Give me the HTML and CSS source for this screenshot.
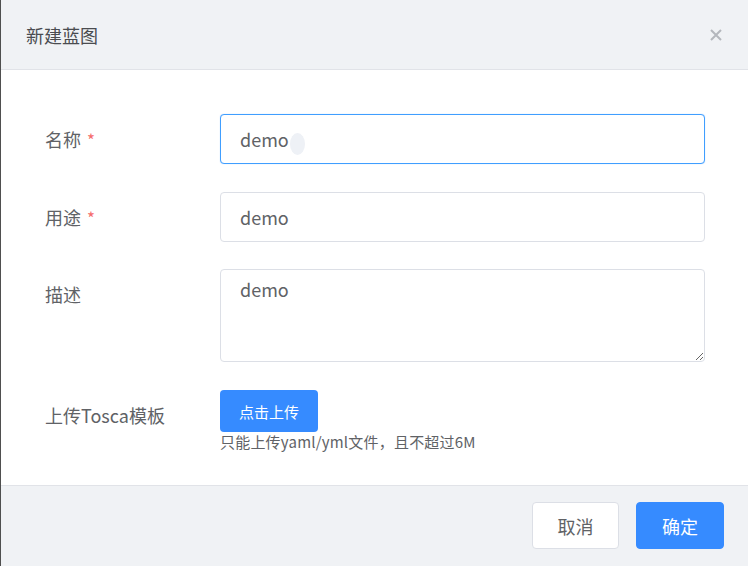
FILE: index.html
```html
<!DOCTYPE html>
<html lang="zh-CN">
<head>
<meta charset="utf-8">
<title>新建蓝图</title>
<link rel="stylesheet" href="styles.css">
</head>
<body>
<div class="dialog">
  <div class="dialog-header">
    <span class="dialog-title">新建蓝图</span>
    <button class="dialog-close" aria-label="关闭">
      <svg width="12" height="12" viewBox="0 0 12 12"><path d="M1 1L11 11M11 1L1 11" stroke="#b4b7bd" stroke-width="2" fill="none"/></svg>
    </button>
  </div>
  <div class="dialog-body">
    <div class="form-item">
      <label class="form-label">名称<span class="req">*</span></label>
      <div class="form-content">
        <div class="input-wrap">
          <input class="input is-focus" type="text" value="demo">
          <span class="blob"></span>
        </div>
      </div>
    </div>
    <div class="form-item">
      <label class="form-label">用途<span class="req">*</span></label>
      <div class="form-content">
        <input class="input" type="text" value="demo">
      </div>
    </div>
    <div class="form-item desc-item">
      <label class="form-label">描述</label>
      <div class="form-content">
        <textarea class="textarea">demo</textarea>
      </div>
    </div>
    <div class="form-item upload-item">
      <label class="form-label">上传Tosca模板</label>
      <div class="form-content">
        <button class="btn-upload">点击上传</button>
        <div class="tip">只能上传yaml/yml文件，且不超过6M</div>
      </div>
    </div>
  </div>
  <div class="dialog-footer">
    <button class="btn btn-default">取消</button>
    <button class="btn btn-primary">确定</button>
  </div>
</div>
</body>
</html>
```
FILE: styles.css
```css
* { box-sizing: border-box; }
html, body { margin: 0; padding: 0; }
body {
  font-family: "Noto Sans CJK SC", "Noto Sans", sans-serif;
  background: #ffffff;
  width: 748px;
  height: 566px;
  overflow: hidden;
}
.dialog {
  width: 748px;
  height: 566px;
  display: flex;
  flex-direction: column;
  border-left: 1px solid #4f4f4f;
  background: #fff;
}
.dialog-header {
  height: 70px;
  flex: none;
  background: #f0f2f5;
  border-bottom: 1px solid #e1e3e8;
  display: flex;
  align-items: center;
  justify-content: space-between;
  padding: 0 26px 0 25px;
}
.dialog-title {
  font-size: 18px;
  color: #4a4c50;
  line-height: 24px;
}
.dialog-close {
  border: 0;
  background: transparent;
  padding: 0;
  width: 12px;
  height: 12px;
  display: flex;
  cursor: pointer;
}
.dialog-body {
  flex: 1;
  padding: 44px 0 0 44px;
  display: flex;
  flex-direction: column;
  gap: 28px;
}
.form-item {
  display: flex;
  align-items: flex-start;
}
.desc-item { margin-top: -1px; }
.form-label {
  width: 175px;
  height: 50px;
  flex: none;
  font-size: 18px;
  line-height: 50px;
  color: #606266;
}
.req {
  color: #f56c6c;
  margin-left: 6px;
  font-size: 17px;
  line-height: 1;
}
.form-content {
  width: 485px;
  display: flex;
  flex-direction: column;
}
.input-wrap { position: relative; }
.input {
  width: 485px;
  height: 50px;
  border: 1px solid #dcdfe6;
  border-radius: 4px;
  padding: 0 19px;
  font-family: inherit;
  font-size: 18px;
  color: #606266;
  background: #fff;
  outline: none;
  display: block;
}
.input.is-focus {
  border-color: #409eff;
  box-shadow: 0 0 1px 0 rgba(64, 158, 255, 0.5);
}
.blob {
  position: absolute;
  left: 70px;
  top: 19px;
  width: 15px;
  height: 22px;
  border-radius: 50%;
  background: #eef1f6;
}
.textarea {
  width: 485px;
  height: 93px;
  border: 1px solid #dcdfe6;
  border-radius: 4px;
  padding: 6px 19px;
  font-family: inherit;
  font-size: 18px;
  line-height: 26px;
  color: #606266;
  resize: vertical;
  outline: none;
  display: block;
}
.btn-upload {
  width: 98px;
  height: 42px;
  border: 0;
  border-radius: 4px;
  background: #368bff;
  color: #fff;
  font-family: inherit;
  font-size: 15px;
  padding: 0;
}
.tip {
  font-size: 15px;
  line-height: 20px;
  color: #606266;
  letter-spacing: 0.2px;
}
.dialog-footer {
  height: 81px;
  flex: none;
  background: #f0f2f5;
  border-top: 1px solid #e1e3e8;
  display: flex;
  justify-content: flex-end;
  align-items: flex-start;
  padding: 16px 24px 0 0;
  gap: 17px;
}
.btn {
  width: 87px;
  height: 47px;
  border-radius: 4px;
  font-family: inherit;
  font-size: 18px;
  padding: 0;
}
.btn-default {
  background: #fff;
  border: 1px solid #dcdfe6;
  color: #606266;
}
.btn-primary {
  width: 88px;
  background: #368bff;
  border: 1px solid #368bff;
  color: #fff;
}
```
